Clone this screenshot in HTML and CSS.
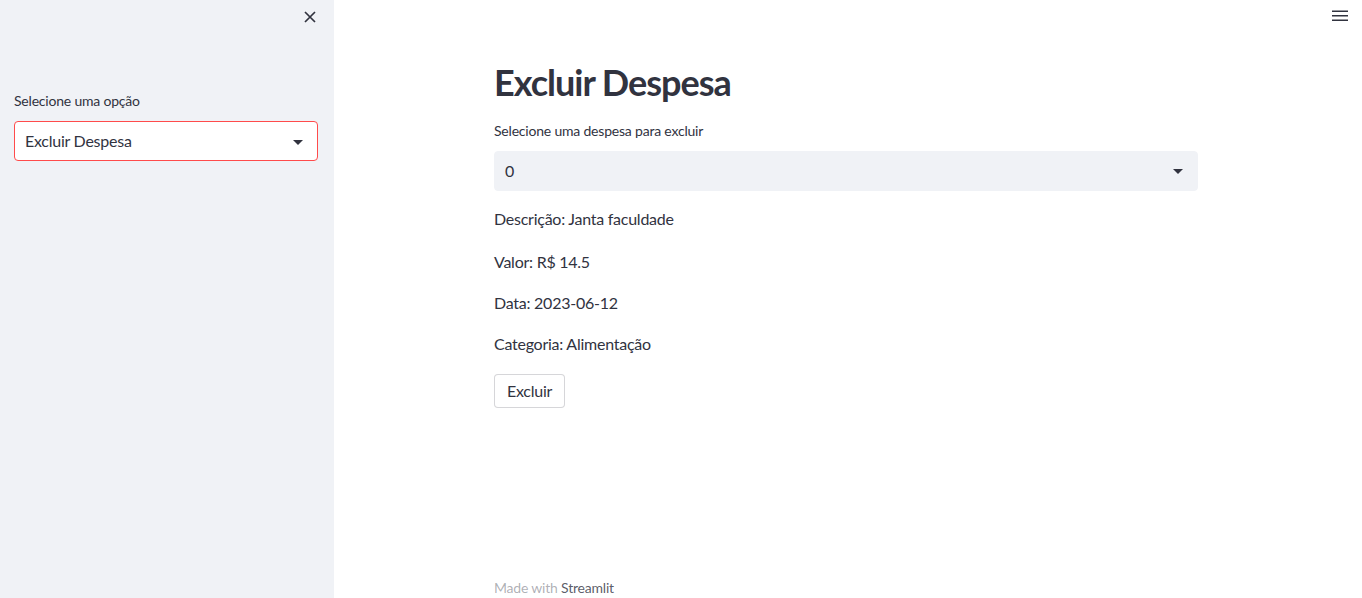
FILE: index.html
```html
<!DOCTYPE html>
<html lang="pt-BR">
<head>
<meta charset="utf-8">
<title>Excluir Despesa</title>
<link rel="stylesheet" href="styles.css">
</head>
<body>
<div class="app">
  <aside class="sidebar">
    <div class="sidebar-head">
      <button class="icon-btn close-btn" aria-label="Fechar">
        <svg width="12" height="12" viewBox="0 0 12 12"><path d="M1 1L11 11M11 1L1 11" stroke="#31333f" stroke-width="1.7" fill="none"/></svg>
      </button>
    </div>
    <div class="field">
      <label class="label">Selecione uma opção</label>
      <div class="select select-focus">
        <span class="select-value">Excluir Despesa</span>
        <svg class="caret" width="10" height="5" viewBox="0 0 10 5"><path d="M0 0H10L5 5Z" fill="#31333f"/></svg>
      </div>
    </div>
  </aside>
  <main class="main">
    <header class="toolbar">
      <button class="icon-btn menu-btn" aria-label="Menu">
        <svg width="16" height="12" viewBox="0 0 16 12"><path d="M0 1.2H16M0 5.7H16M0 10.2H16" stroke="#31333f" stroke-width="1.6"/></svg>
      </button>
    </header>
    <section class="content">
      <h1 class="title">Excluir Despesa</h1>
      <label class="label label-main">Selecione uma despesa para excluir</label>
      <div class="select select-main">
        <span class="select-value">0</span>
        <svg class="caret" width="10" height="5" viewBox="0 0 10 5"><path d="M0 0H10L5 5Z" fill="#31333f"/></svg>
      </div>
      <p class="info first">Descrição: Janta faculdade</p>
      <p class="info">Valor: R$ 14.5</p>
      <p class="info">Data: 2023-06-12</p>
      <p class="info">Categoria: Alimentação</p>
      <div class="actions"><button class="btn">Excluir</button></div>
      <footer class="footer">Made with <span class="brand">Streamlit</span></footer>
    </section>
  </main>
</div>
</body>
</html>
```
FILE: styles.css
```css
* { box-sizing: border-box; }
html, body { margin: 0; padding: 0; }
body {
  font-family: Lato, "Liberation Sans", sans-serif;
  color: #31333f;
  background: #ffffff;
  letter-spacing: -0.25px;
}
.app {
  display: flex;
  height: 598px;
  overflow: hidden;
}
.sidebar {
  width: 334px;
  flex: 0 0 334px;
  background: #f0f2f6;
  padding: 0 16px 0 14px;
}
.sidebar-head {
  height: 34px;
  display: flex;
  justify-content: flex-end;
  align-items: flex-start;
  padding-top: 11px;
  padding-right: 2px;
}
.icon-btn {
  border: 0;
  background: transparent;
  padding: 0;
  margin: 0;
  display: flex;
  cursor: pointer;
}
.field { margin-top: 57px; }
.label {
  display: block;
  font-size: 14px;
  line-height: 20px;
  letter-spacing: -0.2px;
  color: #31333f;
}
.select {
  display: flex;
  align-items: center;
  justify-content: space-between;
  height: 40px;
  border-radius: 4px;
  margin-top: 10px;
  padding: 0 14px 0 10px;
}
.select-focus {
  background: #ffffff;
  border: 1px solid #ff4b4b;
}
.select-value {
  font-size: 16px;
  line-height: 24px;
}
.select-focus .caret { margin-top: 2px; }
.main {
  flex: 1;
  display: flex;
  flex-direction: column;
}
.toolbar {
  height: 32px;
  display: flex;
  justify-content: flex-end;
  padding: 10px 14px 0 0;
}
.content {
  flex: 1;
  width: 704px;
  margin-left: 160px;
  display: flex;
  flex-direction: column;
  padding-top: 26px;
}
.title {
  margin: 0;
  font-size: 36px;
  line-height: 48px;
  font-weight: 700;
  letter-spacing: -1px;
}
.label-main { margin-top: 15px; }
.select-main {
  background: #f0f2f6;
  border: 1px solid #f0f2f6;
}
.select-main .caret { margin-top: 1px; }
.info {
  margin: 17px 0 0;
  font-size: 16px;
  line-height: 24px;
}
.info.first { margin-top: 16px; }
.info.first + .info { margin-top: 19px; }
.actions { margin-top: 18px; }
.btn {
  font-family: inherit;
  font-size: 16px;
  line-height: 24px;
  letter-spacing: -0.25px;
  color: #31333f;
  background: #ffffff;
  border: 1px solid rgba(49, 51, 63, 0.2);
  border-radius: 4px;
  padding: 4px 12px;
  cursor: pointer;
}
.footer {
  margin-top: auto;
  font-size: 14px;
  line-height: 20px;
  letter-spacing: -0.2px;
  color: rgba(49, 51, 63, 0.4);
}
.brand { color: rgba(49, 51, 63, 0.8); }
```
